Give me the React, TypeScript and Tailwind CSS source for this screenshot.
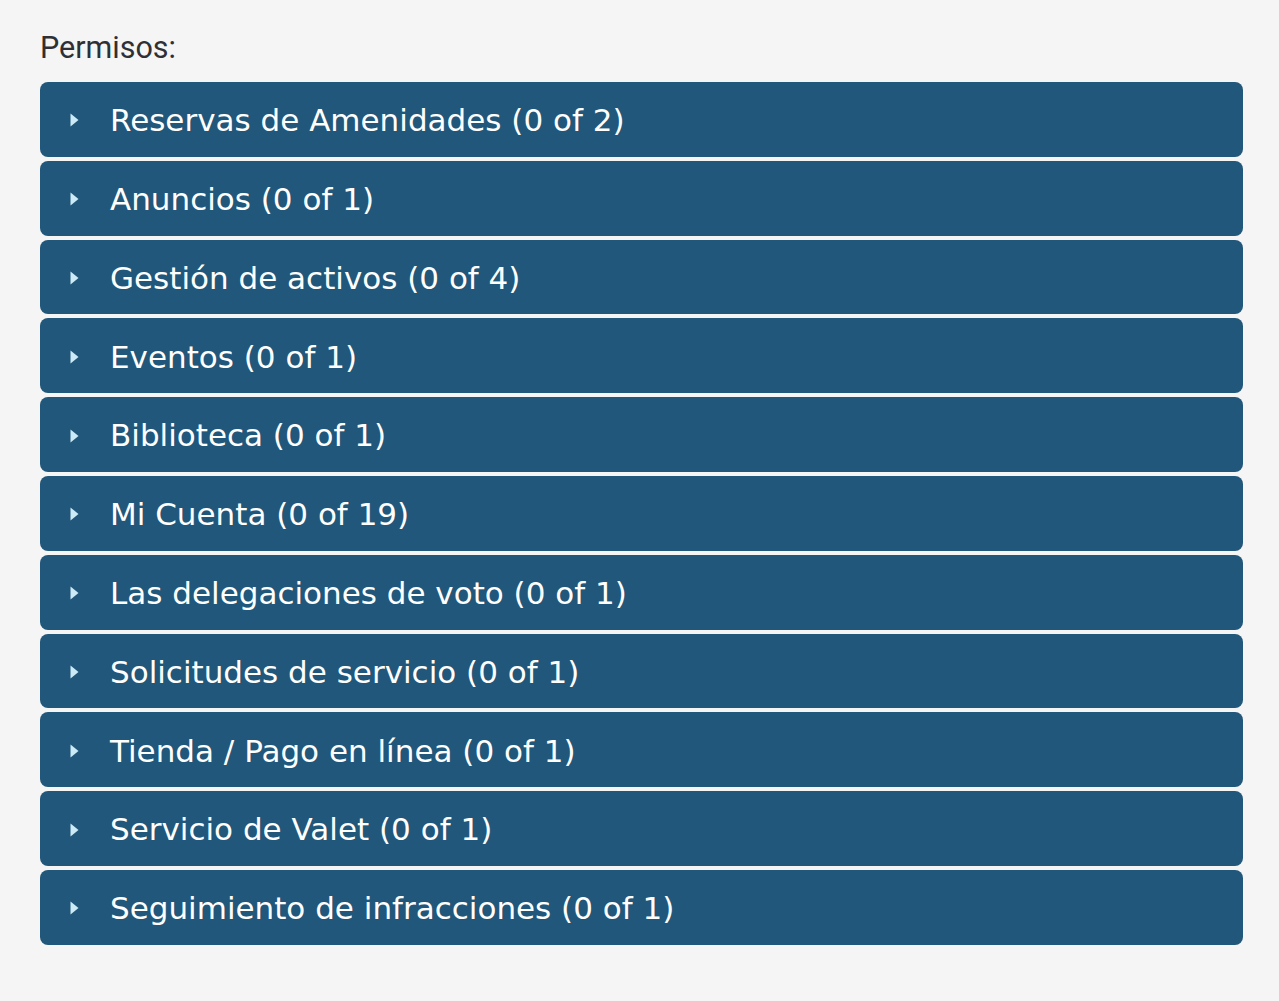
import React from 'react';

const items = [
    'Reservas de Amenidades (0 of 2)',
    'Anuncios (0 of 1)',
    'Gestión de activos (0 of 4)',
    'Eventos (0 of 1)',
    'Biblioteca (0 of 1)',
    'Mi Cuenta (0 of 19)',
    'Las delegaciones de voto (0 of 1)',
    'Solicitudes de servicio (0 of 1)',
    'Tienda / Pago en línea (0 of 1)',
    'Servicio de Valet (0 of 1)',
    'Seguimiento de infracciones (0 of 1)',
];

const Caret = () => (
    <svg width="9" height="14" viewBox="0 0 9 14" className="shrink-0">
        <path d="M0.5 0.5 L8.5 7 L0.5 13.5 Z" fill="#cdebf6" />
    </svg>
);

function App() {
    return (
        <div className="min-h-screen bg-[#f5f5f5] pl-10 pr-9 pt-[30px]" style={{ fontFamily: 'Roboto, sans-serif' }}>
            <h2 className="text-[30.5px] leading-[36px] text-[#2f3035] mb-[16px]">Permisos:</h2>
            <div className="flex flex-col gap-1">
                {items.map((label) => (
                    <button
                        key={label}
                        className="flex items-center h-[74.8px] w-full rounded-lg bg-[#20577a] pl-[30px] pt-[2px] text-left"
                    >
                        <Caret />
                        <span
                            className="ml-[31px] text-[31px] text-white"
                            style={{ fontFamily: '"DejaVu Sans", Verdana, sans-serif' }}
                        >
                            {label}
                        </span>
                    </button>
                ))}
            </div>
        </div>
    );
}

export default App;
